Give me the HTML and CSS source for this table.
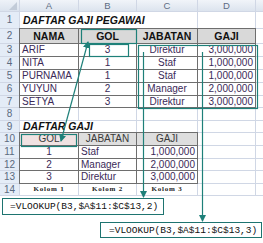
FILE: index.html
```html
<!DOCTYPE html>
<html>
<head>
<meta charset="utf-8">
<link rel="stylesheet" href="styles.css">
</head>
<body>
<div class="page">
  <div class="sheet">
    <div class="corner"></div><div class="ch">A</div><div class="ch">B</div><div class="ch">C</div><div class="ch">D</div><div class="ch blank"></div>

    <div class="rh">1</div><div class="c title span3">DAFTAR GAJI PEGAWAI</div><div class="c"></div><div class="c"></div>

    <div class="rh">2</div><div class="c b hd">NAMA</div><div class="c b hd">GOL</div><div class="c b hd">JABATAN</div><div class="c b hd">GAJI</div><div class="c"></div>

    <div class="rh">3</div><div class="c b l">ARIF</div><div class="c b m">3</div><div class="c b m">Direktur</div><div class="c b r">3,000,000</div><div class="c"></div>
    <div class="rh">4</div><div class="c b l">NITA</div><div class="c b m">1</div><div class="c b m">Staf</div><div class="c b r">1,000,000</div><div class="c"></div>
    <div class="rh">5</div><div class="c b l">PURNAMA</div><div class="c b m">1</div><div class="c b m">Staf</div><div class="c b r">1,000,000</div><div class="c"></div>
    <div class="rh">6</div><div class="c b l">YUYUN</div><div class="c b m">2</div><div class="c b m">Manager</div><div class="c b r">2,000,000</div><div class="c"></div>
    <div class="rh">7</div><div class="c b l">SETYA</div><div class="c b m">3</div><div class="c b m">Direktur</div><div class="c b r">3,000,000</div><div class="c"></div>

    <div class="rh">8</div><div class="c"></div><div class="c"></div><div class="c"></div><div class="c"></div><div class="c"></div>

    <div class="rh">9</div><div class="c title span2">DAFTAR GAJI</div><div class="c"></div><div class="c"></div><div class="c"></div>

    <div class="rh">10</div><div class="c b hd2 pink">GOL</div><div class="c b hd2">JABATAN</div><div class="c b hd2">GAJI</div><div class="c"></div><div class="c"></div>
    <div class="rh">11</div><div class="c b m">1</div><div class="c b l">Staf</div><div class="c b r">1,000,000</div><div class="c"></div><div class="c"></div>
    <div class="rh">12</div><div class="c b m">2</div><div class="c b l">Manager</div><div class="c b r">2,000,000</div><div class="c"></div><div class="c"></div>
    <div class="rh">13</div><div class="c b m">3</div><div class="c b l">Direktur</div><div class="c b r">3,000,000</div><div class="c"></div><div class="c"></div>

    <div class="rh">14</div><div class="c kol">Kolom 1</div><div class="c kol">Kolom 2</div><div class="c kol">Kolom 3</div><div class="c"></div><div class="c"></div>
  </div>

  <div class="formulas">
    <div class="fbox f1">=VLOOKUP(B3,$A$11:$C$13,2)</div>
    <div class="fbox f2">=VLOOKUP(B3,$A$11:$C$13,3)</div>
  </div>

  <svg class="overlay" width="263" height="243" viewBox="0 0 263 243">
    <defs>
      <marker id="ah" markerWidth="7" markerHeight="7" refX="6" refY="3.5" orient="auto-start-reverse" markerUnits="userSpaceOnUse">
        <path d="M0,0 L7,3.5 L0,7 z" fill="#1e8079"/>
      </marker>
    </defs>
    <g fill="none" stroke="#1e8079" stroke-width="1.2">
      <rect x="81.5" y="29.5" width="55" height="14"/>
      <rect x="89.5" y="44.5" width="39" height="12"/>
      <rect x="138.5" y="45.5" width="119" height="63"/>
      <rect x="21.5" y="134.5" width="55" height="12"/>
      <line x1="88" y1="42" x2="61" y2="141" marker-start="url(#ah)" marker-end="url(#ah)"/>
      <line x1="143.5" y1="52" x2="143.5" y2="197" marker-end="url(#ah)"/>
      <line x1="202.5" y1="52" x2="202.5" y2="221" marker-end="url(#ah)"/>
    </g>
  </svg>
</div>
</body>
</html>
```

FILE: styles.css
```css
html, body {
  margin: 0;
  padding: 0;
  background: #ffffff;
}

.page {
  position: relative;
  width: 263px;
  height: 243px;
  overflow: hidden;
  font-family: "Liberation Sans", Arial, sans-serif;
}

.sheet {
  display: grid;
  grid-template-columns: 19px 58px 57px 60px 57px 1fr;
  grid-template-rows: 11px 16px 14px 12px 12px 12px 12px 11px 12px 11px 12px 12px 11px 12px 11px;
  gap: 1px;
  background: #d0d7e5;
  border-bottom: 1px solid #d0d7e5;
}

.corner {
  position: relative;
  background: linear-gradient(#eef2f8, #dbe3ee);
}
.corner::after {
  content: "";
  position: absolute;
  right: 2px;
  bottom: 1px;
  width: 0;
  height: 0;
  border-left: 8px solid transparent;
  border-bottom: 8px solid #c2cbd8;
}

.ch {
  background: linear-gradient(#f1f4f9, #dce4ee);
  color: #5d6c83;
  font-size: 9.5px;
  display: flex;
  align-items: center;
  justify-content: center;
  line-height: 1;
}

.rh {
  background: #e4ecf7;
  color: #5b6a80;
  font-size: 10px;
  display: flex;
  align-items: center;
  justify-content: center;
  line-height: 1;
}

.c {
  background: #ffffff;
  font-size: 10px;
  line-height: 1;
  color: #3b2a58;
  display: flex;
  align-items: center;
  padding: 0 2px;
  white-space: nowrap;
  overflow: visible;
}

.span3 { grid-column: span 3; }
.span2 { grid-column: span 2; }

.title {
  font-weight: bold;
  font-style: italic;
  color: #111111;
  font-size: 10.5px;
  padding-left: 3px;
}

.b {
  outline: 1px solid #6e6e6e;
}

.hd {
  background: #d9d9d9;
  color: #111111;
  font-weight: bold;
  font-size: 10.5px;
  justify-content: center;
}

.hd2 {
  background: #dedede;
  color: #3a3a3a;
  justify-content: center;
}

.pink {
  background: #f0e2e2;
}

.l { justify-content: flex-start; }
.m { justify-content: center; }
.r { justify-content: flex-end; }

.kol {
  justify-content: center;
  font-family: "Liberation Serif", "Times New Roman", serif;
  font-weight: bold;
  font-size: 7px;
  letter-spacing: 0.8px;
  color: #222222;
}

.formulas {
  display: flex;
  flex-direction: column;
  align-items: flex-start;
}

.fbox {
  box-sizing: border-box;
  border: 1px solid #1e7470;
  background: #ffffff;
  font-family: "Liberation Mono", "Courier New", monospace;
  font-size: 9.5px;
  color: #111111;
  display: flex;
  align-items: center;
  white-space: nowrap;
}

.f1 {
  margin: 2px 0 0 2px;
  width: 162px;
  height: 17px;
  padding-left: 7px;
}

.f2 {
  margin: 7px 0 0 100px;
  width: 162px;
  height: 16px;
  padding-left: 8px;
}

.overlay {
  position: absolute;
  left: 0;
  top: 0;
  pointer-events: none;
}
```
